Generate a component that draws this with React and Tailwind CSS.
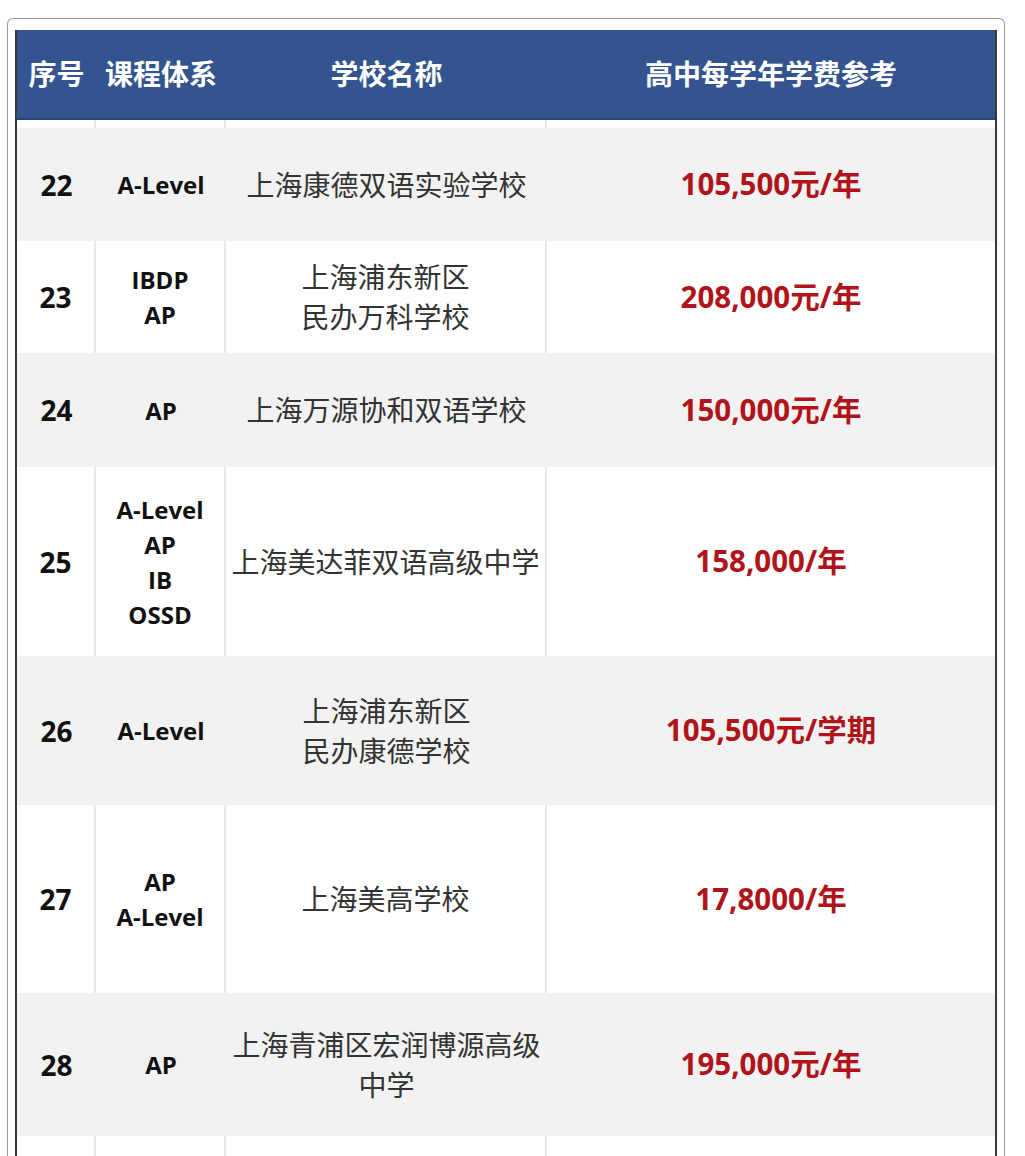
import React from "react";

const rows = [
  { no: "22", courses: ["A-Level"], school: ["上海康德双语实验学校"], price: "105,500元/年", h: "h-[113px]", gray: true },
  { no: "23", courses: ["IBDP", "AP"], school: ["上海浦东新区", "民办万科学校"], price: "208,000元/年", h: "h-[112px]", gray: false },
  { no: "24", courses: ["AP"], school: ["上海万源协和双语学校"], price: "150,000元/年", h: "h-[114px]", gray: true },
  { no: "25", courses: ["A-Level", "AP", "IB", "OSSD"], school: ["上海美达菲双语高级中学"], price: "158,000/年", h: "h-[189px]", gray: false },
  { no: "26", courses: ["A-Level"], school: ["上海浦东新区", "民办康德学校"], price: "105,500元/学期", h: "h-[149px]", gray: true },
  { no: "27", courses: ["AP", "A-Level"], school: ["上海美高学校"], price: "17,8000/年", h: "h-[188px]", gray: false },
  { no: "28", courses: ["AP"], school: ["上海青浦区宏润博源高级", "中学"], price: "195,000元/年", h: "h-[143px]", gray: true },
];

const font = "font-['Open_Sans','Noto_Sans_CJK_SC',sans-serif]";
const cols = "grid grid-cols-[79px_130px_321px_448px]";

const Cell = ({ gray, last, children }) => (
  <div
    className={`flex flex-col items-center justify-center text-center ${
      gray || last ? "" : "border-r-2 border-[#e9e9e9]"
    }`}
  >
    {children}
  </div>
);

const Row = ({ row }) => (
  <div className={`${cols} ${row.h} ${row.gray ? "bg-[#f2f2f2]" : "bg-white"}`}>
    <Cell gray={row.gray}>
      <span className="text-[28px] font-bold text-[#111]">{row.no}</span>
    </Cell>
    <Cell gray={row.gray}>
      {row.courses.map((c) => (
        <span key={c} className="text-[24px] font-bold leading-[35px] text-[#111]">
          {c}
        </span>
      ))}
    </Cell>
    <Cell gray={row.gray}>
      {row.school.map((s) => (
        <span key={s} className="text-[28px] leading-[40px] text-[#333]">
          {s}
        </span>
      ))}
    </Cell>
    <Cell gray={row.gray} last>
      <span className="text-[29.5px] font-bold text-[#b0141a]">{row.price}</span>
    </Cell>
  </div>
);

const Spacer = ({ h }) => (
  <div className={`${cols} ${h} bg-white`}>
    <div className="border-r-2 border-[#e9e9e9]" />
    <div className="border-r-2 border-[#e9e9e9]" />
    <div className="border-r-2 border-[#e9e9e9]" />
    <div />
  </div>
);

export default function App() {
  return (
    <div className={`h-[1156px] overflow-hidden bg-white pt-[18px] pl-[7px] ${font}`}>
      <div className="w-[998px] h-[1200px] rounded-t-[6px] border border-b-0 border-[#9a9a9a] pt-[11px] px-[7px]">
        <div className="w-[982px] border-x-2 border-[#3a3a3a]">
          <div className={`${cols} h-[90px] bg-[#33548f] border-b-2 border-[#2a4475] text-white text-[28px] font-bold`}>
            <div className="flex items-center justify-center">序号</div>
            <div className="flex items-center justify-center">课程体系</div>
            <div className="flex items-center justify-center">学校名称</div>
            <div className="flex items-center justify-center">高中每学年学费参考</div>
          </div>
          <Spacer h="h-[8px]" />
          {rows.map((r) => (
            <Row key={r.no} row={r} />
          ))}
          <Spacer h="h-[60px]" />
        </div>
      </div>
    </div>
  );
}
